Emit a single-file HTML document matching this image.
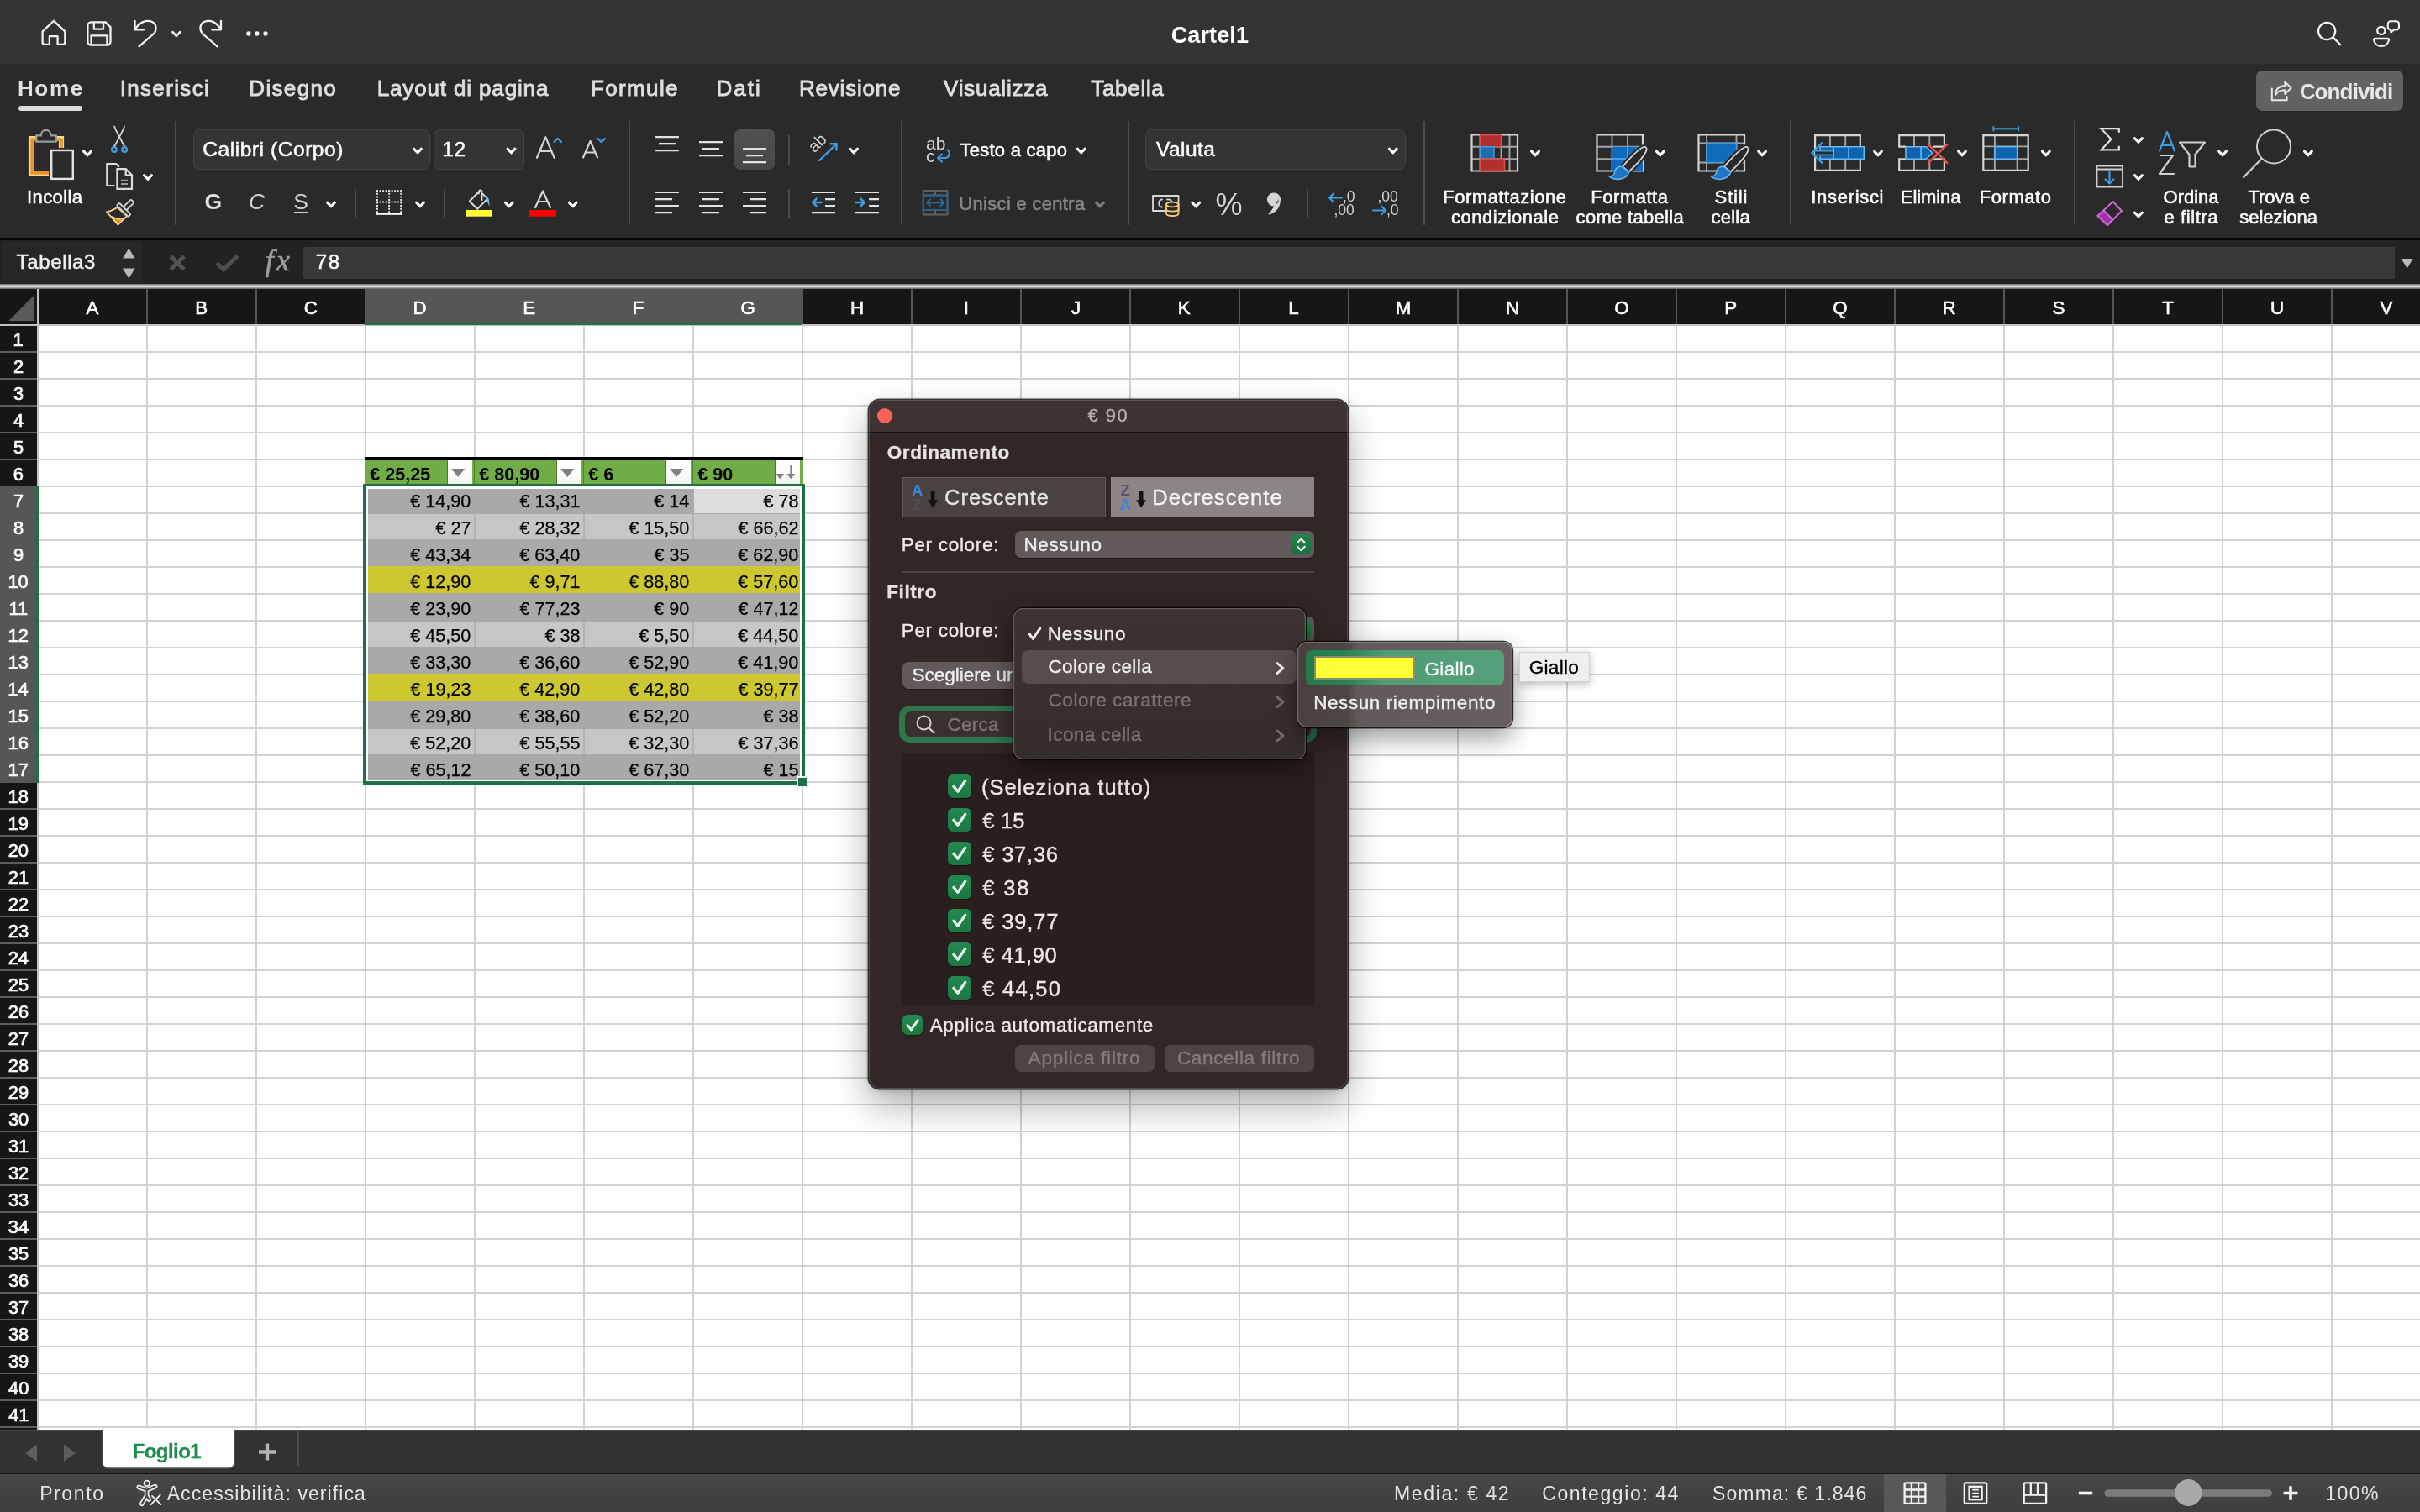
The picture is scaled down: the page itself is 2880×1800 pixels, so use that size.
<!DOCTYPE html>
<html lang="it"><head><meta charset="utf-8"><title>Cartel1</title>
<style>
html,body{margin:0;padding:0;background:#fff;}
body{width:2880px;height:1800px;position:relative;overflow:hidden;font-family:"Liberation Sans",sans-serif;}
div,span,svg{position:absolute;display:block;}
</style></head><body>
<div id="app" style="left:0;top:0;width:2880px;height:1800px;will-change:transform;">
<div style="left:0px;top:344px;width:2880px;height:1358px;background:#fff;"></div>
<div style="left:44px;top:386px;width:2836px;height:1316px;background:linear-gradient(to right,#d2d2d2 2px,transparent 2px) 0 0/130px 100%,linear-gradient(to bottom,#d2d2d2 2px,transparent 2px) 0 0/100% 32px;"></div>
<div style="left:0px;top:344px;width:2880px;height:42px;background:#161616;"></div>
<div style="left:44px;top:344px;width:2836px;height:42px;background:linear-gradient(to right,#555 2px,transparent 2px) 0 0/130px 100%;"></div>
<div style="left:44px;top:344px;width:2px;height:42px;background:#c4c2be;"></div>
<div style="left:0px;top:386px;width:2880px;height:2px;background:#c4c2be;"></div>
<div style="left:434px;top:344px;width:521px;height:42px;background:#565656;"></div>
<div style="left:434px;top:384px;width:521px;height:3px;background:#1e7145;"></div>
<svg style="left:0;top:344px" width="44" height="42"><polygon points="40,8 40,38 10.3,38" fill="#5a5a5a"/></svg>
<span style="left:102.59px;top:356px;font:22.3px/22.3px 'Liberation Sans',sans-serif;color:#fff;white-space:pre;-webkit-text-stroke:0.6px #fff;">A</span>
<span style="left:232.25px;top:356px;font:22.3px/22.3px 'Liberation Sans',sans-serif;color:#fff;white-space:pre;-webkit-text-stroke:0.6px #fff;">B</span>
<span style="left:361.80px;top:356px;font:22.3px/22.3px 'Liberation Sans',sans-serif;color:#fff;white-space:pre;-webkit-text-stroke:0.6px #fff;">C</span>
<span style="left:491.58px;top:356px;font:22.3px/22.3px 'Liberation Sans',sans-serif;color:#fff;white-space:pre;-webkit-text-stroke:0.6px #fff;">D</span>
<span style="left:622.14px;top:356px;font:22.3px/22.3px 'Liberation Sans',sans-serif;color:#fff;white-space:pre;-webkit-text-stroke:0.6px #fff;">E</span>
<span style="left:752.70px;top:356px;font:22.3px/22.3px 'Liberation Sans',sans-serif;color:#fff;white-space:pre;-webkit-text-stroke:0.6px #fff;">F</span>
<span style="left:881.58px;top:356px;font:22.3px/22.3px 'Liberation Sans',sans-serif;color:#fff;white-space:pre;-webkit-text-stroke:0.6px #fff;">G</span>
<span style="left:1011.91px;top:356px;font:22.3px/22.3px 'Liberation Sans',sans-serif;color:#fff;white-space:pre;-webkit-text-stroke:0.6px #fff;">H</span>
<span style="left:1146.87px;top:356px;font:22.3px/22.3px 'Liberation Sans',sans-serif;color:#fff;white-space:pre;-webkit-text-stroke:0.6px #fff;">I</span>
<span style="left:1275.04px;top:356px;font:22.3px/22.3px 'Liberation Sans',sans-serif;color:#fff;white-space:pre;-webkit-text-stroke:0.6px #fff;">J</span>
<span style="left:1401.75px;top:356px;font:22.3px/22.3px 'Liberation Sans',sans-serif;color:#fff;white-space:pre;-webkit-text-stroke:0.6px #fff;">K</span>
<span style="left:1533.25px;top:356px;font:22.3px/22.3px 'Liberation Sans',sans-serif;color:#fff;white-space:pre;-webkit-text-stroke:0.6px #fff;">L</span>
<span style="left:1660.69px;top:356px;font:22.3px/22.3px 'Liberation Sans',sans-serif;color:#fff;white-space:pre;-webkit-text-stroke:0.6px #fff;">M</span>
<span style="left:1791.91px;top:356px;font:22.3px/22.3px 'Liberation Sans',sans-serif;color:#fff;white-space:pre;-webkit-text-stroke:0.6px #fff;">N</span>
<span style="left:1921.36px;top:356px;font:22.3px/22.3px 'Liberation Sans',sans-serif;color:#fff;white-space:pre;-webkit-text-stroke:0.6px #fff;">O</span>
<span style="left:2052.25px;top:356px;font:22.3px/22.3px 'Liberation Sans',sans-serif;color:#fff;white-space:pre;-webkit-text-stroke:0.6px #fff;">P</span>
<span style="left:2181.36px;top:356px;font:22.3px/22.3px 'Liberation Sans',sans-serif;color:#fff;white-space:pre;-webkit-text-stroke:0.6px #fff;">Q</span>
<span style="left:2311.52px;top:356px;font:22.3px/22.3px 'Liberation Sans',sans-serif;color:#fff;white-space:pre;-webkit-text-stroke:0.6px #fff;">R</span>
<span style="left:2442.53px;top:356px;font:22.3px/22.3px 'Liberation Sans',sans-serif;color:#fff;white-space:pre;-webkit-text-stroke:0.6px #fff;">S</span>
<span style="left:2573.20px;top:356px;font:22.3px/22.3px 'Liberation Sans',sans-serif;color:#fff;white-space:pre;-webkit-text-stroke:0.6px #fff;">T</span>
<span style="left:2701.97px;top:356px;font:22.3px/22.3px 'Liberation Sans',sans-serif;color:#fff;white-space:pre;-webkit-text-stroke:0.6px #fff;">U</span>
<span style="left:2832.59px;top:356px;font:22.3px/22.3px 'Liberation Sans',sans-serif;color:#fff;white-space:pre;-webkit-text-stroke:0.6px #fff;">V</span>
<div style="left:0px;top:388px;width:44px;height:1314px;background:#161616;"></div>
<div style="left:0px;top:386px;width:44px;height:1316px;background:linear-gradient(to bottom,#5e5e5e 2px,transparent 2px) 0 0/100% 32px;"></div>
<div style="left:0px;top:386px;width:46px;height:2px;background:#c4c2be;"></div>
<div style="left:44px;top:388px;width:2px;height:1314px;background:#c4c2be;"></div>
<div style="left:0px;top:578px;width:44px;height:354px;background:#565656;"></div>
<div style="left:42px;top:578px;width:4px;height:354px;background:#1e7145;"></div>
<span style="left:15.62px;top:394px;font:21.8px/21.8px 'Liberation Sans',sans-serif;color:#fff;white-space:pre;-webkit-text-stroke:0.7px #fff;">1</span>
<span style="left:15.90px;top:426px;font:21.8px/21.8px 'Liberation Sans',sans-serif;color:#fff;white-space:pre;-webkit-text-stroke:0.7px #fff;">2</span>
<span style="left:16.00px;top:458px;font:21.8px/21.8px 'Liberation Sans',sans-serif;color:#fff;white-space:pre;-webkit-text-stroke:0.7px #fff;">3</span>
<span style="left:16.00px;top:490px;font:21.8px/21.8px 'Liberation Sans',sans-serif;color:#fff;white-space:pre;-webkit-text-stroke:0.7px #fff;">4</span>
<span style="left:15.95px;top:522px;font:21.8px/21.8px 'Liberation Sans',sans-serif;color:#fff;white-space:pre;-webkit-text-stroke:0.7px #fff;">5</span>
<span style="left:15.84px;top:554px;font:21.8px/21.8px 'Liberation Sans',sans-serif;color:#fff;white-space:pre;-webkit-text-stroke:0.7px #fff;">6</span>
<span style="left:15.90px;top:586px;font:21.8px/21.8px 'Liberation Sans',sans-serif;color:#fff;white-space:pre;-webkit-text-stroke:0.7px #fff;">7</span>
<span style="left:15.95px;top:618px;font:21.8px/21.8px 'Liberation Sans',sans-serif;color:#fff;white-space:pre;-webkit-text-stroke:0.7px #fff;">8</span>
<span style="left:15.95px;top:650px;font:21.8px/21.8px 'Liberation Sans',sans-serif;color:#fff;white-space:pre;-webkit-text-stroke:0.7px #fff;">9</span>
<span style="left:9.46px;top:682px;font:21.8px/21.8px 'Liberation Sans',sans-serif;color:#fff;white-space:pre;-webkit-text-stroke:0.7px #fff;">10</span>
<span style="left:10.39px;top:714px;font:21.8px/21.8px 'Liberation Sans',sans-serif;color:#fff;white-space:pre;-webkit-text-stroke:0.7px #fff;">11</span>
<span style="left:9.57px;top:746px;font:21.8px/21.8px 'Liberation Sans',sans-serif;color:#fff;white-space:pre;-webkit-text-stroke:0.7px #fff;">12</span>
<span style="left:9.52px;top:778px;font:21.8px/21.8px 'Liberation Sans',sans-serif;color:#fff;white-space:pre;-webkit-text-stroke:0.7px #fff;">13</span>
<span style="left:9.36px;top:810px;font:21.8px/21.8px 'Liberation Sans',sans-serif;color:#fff;white-space:pre;-webkit-text-stroke:0.7px #fff;">14</span>
<span style="left:9.52px;top:842px;font:21.8px/21.8px 'Liberation Sans',sans-serif;color:#fff;white-space:pre;-webkit-text-stroke:0.7px #fff;">15</span>
<span style="left:9.52px;top:874px;font:21.8px/21.8px 'Liberation Sans',sans-serif;color:#fff;white-space:pre;-webkit-text-stroke:0.7px #fff;">16</span>
<span style="left:9.57px;top:906px;font:21.8px/21.8px 'Liberation Sans',sans-serif;color:#fff;white-space:pre;-webkit-text-stroke:0.7px #fff;">17</span>
<span style="left:9.52px;top:938px;font:21.8px/21.8px 'Liberation Sans',sans-serif;color:#fff;white-space:pre;-webkit-text-stroke:0.7px #fff;">18</span>
<span style="left:9.57px;top:970px;font:21.8px/21.8px 'Liberation Sans',sans-serif;color:#fff;white-space:pre;-webkit-text-stroke:0.7px #fff;">19</span>
<span style="left:9.74px;top:1002px;font:21.8px/21.8px 'Liberation Sans',sans-serif;color:#fff;white-space:pre;-webkit-text-stroke:0.7px #fff;">20</span>
<span style="left:9.85px;top:1034px;font:21.8px/21.8px 'Liberation Sans',sans-serif;color:#fff;white-space:pre;-webkit-text-stroke:0.7px #fff;">21</span>
<span style="left:9.85px;top:1066px;font:21.8px/21.8px 'Liberation Sans',sans-serif;color:#fff;white-space:pre;-webkit-text-stroke:0.7px #fff;">22</span>
<span style="left:9.79px;top:1098px;font:21.8px/21.8px 'Liberation Sans',sans-serif;color:#fff;white-space:pre;-webkit-text-stroke:0.7px #fff;">23</span>
<span style="left:9.63px;top:1130px;font:21.8px/21.8px 'Liberation Sans',sans-serif;color:#fff;white-space:pre;-webkit-text-stroke:0.7px #fff;">24</span>
<span style="left:9.79px;top:1162px;font:21.8px/21.8px 'Liberation Sans',sans-serif;color:#fff;white-space:pre;-webkit-text-stroke:0.7px #fff;">25</span>
<span style="left:9.79px;top:1194px;font:21.8px/21.8px 'Liberation Sans',sans-serif;color:#fff;white-space:pre;-webkit-text-stroke:0.7px #fff;">26</span>
<span style="left:9.85px;top:1226px;font:21.8px/21.8px 'Liberation Sans',sans-serif;color:#fff;white-space:pre;-webkit-text-stroke:0.7px #fff;">27</span>
<span style="left:9.79px;top:1258px;font:21.8px/21.8px 'Liberation Sans',sans-serif;color:#fff;white-space:pre;-webkit-text-stroke:0.7px #fff;">28</span>
<span style="left:9.85px;top:1290px;font:21.8px/21.8px 'Liberation Sans',sans-serif;color:#fff;white-space:pre;-webkit-text-stroke:0.7px #fff;">29</span>
<span style="left:9.90px;top:1322px;font:21.8px/21.8px 'Liberation Sans',sans-serif;color:#fff;white-space:pre;-webkit-text-stroke:0.7px #fff;">30</span>
<span style="left:10.01px;top:1354px;font:21.8px/21.8px 'Liberation Sans',sans-serif;color:#fff;white-space:pre;-webkit-text-stroke:0.7px #fff;">31</span>
<span style="left:10.01px;top:1386px;font:21.8px/21.8px 'Liberation Sans',sans-serif;color:#fff;white-space:pre;-webkit-text-stroke:0.7px #fff;">32</span>
<span style="left:9.96px;top:1418px;font:21.8px/21.8px 'Liberation Sans',sans-serif;color:#fff;white-space:pre;-webkit-text-stroke:0.7px #fff;">33</span>
<span style="left:9.79px;top:1450px;font:21.8px/21.8px 'Liberation Sans',sans-serif;color:#fff;white-space:pre;-webkit-text-stroke:0.7px #fff;">34</span>
<span style="left:9.96px;top:1482px;font:21.8px/21.8px 'Liberation Sans',sans-serif;color:#fff;white-space:pre;-webkit-text-stroke:0.7px #fff;">35</span>
<span style="left:9.96px;top:1514px;font:21.8px/21.8px 'Liberation Sans',sans-serif;color:#fff;white-space:pre;-webkit-text-stroke:0.7px #fff;">36</span>
<span style="left:10.01px;top:1546px;font:21.8px/21.8px 'Liberation Sans',sans-serif;color:#fff;white-space:pre;-webkit-text-stroke:0.7px #fff;">37</span>
<span style="left:9.96px;top:1578px;font:21.8px/21.8px 'Liberation Sans',sans-serif;color:#fff;white-space:pre;-webkit-text-stroke:0.7px #fff;">38</span>
<span style="left:10.01px;top:1610px;font:21.8px/21.8px 'Liberation Sans',sans-serif;color:#fff;white-space:pre;-webkit-text-stroke:0.7px #fff;">39</span>
<span style="left:10.06px;top:1642px;font:21.8px/21.8px 'Liberation Sans',sans-serif;color:#fff;white-space:pre;-webkit-text-stroke:0.7px #fff;">40</span>
<span style="left:10.17px;top:1674px;font:21.8px/21.8px 'Liberation Sans',sans-serif;color:#fff;white-space:pre;-webkit-text-stroke:0.7px #fff;">41</span>
<div style="left:434px;top:544px;width:522px;height:4px;background:#000;"></div>
<div style="left:434px;top:548px;width:522px;height:30px;background:#70ad47;"></div>
<span style="left:440.29px;top:554px;font:bold 21.6px/21.6px 'Liberation Sans',sans-serif;color:#000;white-space:pre;">€ 25,25</span>
<div style="left:532.3px;top:548px;width:29.8px;height:28px;background:linear-gradient(#fff 45%,#f1f1f1);border-left:1.600px solid #4f7a2e;box-sizing:border-box;"><svg width="30" height="28" style="left:-1.600px;top:0"><polygon points="5.100,10.100 21.300,10.100 13.200,20" fill="#808080"/></svg></div>
<div style="left:563.5px;top:548px;width:1.5px;height:30px;background:#4e8530;"></div>
<span style="left:570.29px;top:554px;font:bold 21.6px/21.6px 'Liberation Sans',sans-serif;color:#000;white-space:pre;">€ 80,90</span>
<div style="left:662.3px;top:548px;width:29.8px;height:28px;background:linear-gradient(#fff 45%,#f1f1f1);border-left:1.600px solid #4f7a2e;box-sizing:border-box;"><svg width="30" height="28" style="left:-1.600px;top:0"><polygon points="5.100,10.100 21.300,10.100 13.200,20" fill="#808080"/></svg></div>
<div style="left:693.5px;top:548px;width:1.5px;height:30px;background:#4e8530;"></div>
<span style="left:700.29px;top:554px;font:bold 21.6px/21.6px 'Liberation Sans',sans-serif;color:#000;white-space:pre;">€ 6</span>
<div style="left:792.3px;top:548px;width:29.8px;height:28px;background:linear-gradient(#fff 45%,#f1f1f1);border-left:1.600px solid #4f7a2e;box-sizing:border-box;"><svg width="30" height="28" style="left:-1.600px;top:0"><polygon points="5.100,10.100 21.300,10.100 13.200,20" fill="#808080"/></svg></div>
<div style="left:823.5px;top:548px;width:1.5px;height:30px;background:#4e8530;"></div>
<span style="left:830.29px;top:554px;font:bold 21.6px/21.6px 'Liberation Sans',sans-serif;color:#000;white-space:pre;">€ 90</span>
<div style="left:922.3px;top:548px;width:29.8px;height:28px;background:linear-gradient(#fff 45%,#f1f1f1);border-left:1.600px solid #4f7a2e;box-sizing:border-box;"><svg width="30" height="28" style="left:-1.600px;top:0"><polygon points="1.200,16 11.400,16 6.300,22.200" fill="#808080"/><path d="M19.300 6V17" stroke="#808080" stroke-width="1.900"/><polygon points="14.300,15.900 24.300,15.900 19.300,22.200" fill="#808080"/></svg></div>
<div style="left:954px;top:548px;width:2px;height:30px;background:#70ad47;"></div>
<div style="left:432px;top:576px;width:526px;height:358px;background:#1e7145;"></div>
<div style="left:435.3px;top:579.4px;width:518.8px;height:350.4px;background:#fff;"></div>
<div style="left:438px;top:582px;width:514px;height:346px;background:#c6c6c6;"></div>
<div style="left:564px;top:612px;width:2px;height:30px;background:#b2b2b2;"></div>
<div style="left:694px;top:612px;width:2px;height:30px;background:#b2b2b2;"></div>
<div style="left:824px;top:612px;width:2px;height:30px;background:#b2b2b2;"></div>
<div style="left:564px;top:740px;width:2px;height:30px;background:#b2b2b2;"></div>
<div style="left:694px;top:740px;width:2px;height:30px;background:#b2b2b2;"></div>
<div style="left:824px;top:740px;width:2px;height:30px;background:#b2b2b2;"></div>
<div style="left:564px;top:868px;width:2px;height:30px;background:#b2b2b2;"></div>
<div style="left:694px;top:868px;width:2px;height:30px;background:#b2b2b2;"></div>
<div style="left:824px;top:868px;width:2px;height:30px;background:#b2b2b2;"></div>
<div style="left:438px;top:582px;width:514px;height:30px;background:#a9a9a9;"></div>
<div style="left:438px;top:642px;width:514px;height:34px;background:#a9a9a9;"></div>
<div style="left:438px;top:674px;width:514px;height:34px;background:#cdc82f;"></div>
<div style="left:438px;top:706px;width:514px;height:34px;background:#a9a9a9;"></div>
<div style="left:438px;top:770px;width:514px;height:34px;background:#a9a9a9;"></div>
<div style="left:438px;top:802px;width:514px;height:34px;background:#cdc82f;"></div>
<div style="left:438px;top:834px;width:514px;height:34px;background:#a9a9a9;"></div>
<div style="left:438px;top:898px;width:514px;height:30px;background:#a9a9a9;"></div>
<span style="left:488.34px;top:586px;font:21.6px/21.6px 'Liberation Sans',sans-serif;color:#000;white-space:pre;-webkit-text-stroke:0.25px #000;">€ 14,90</span>
<span style="left:618.56px;top:586px;font:21.6px/21.6px 'Liberation Sans',sans-serif;color:#000;white-space:pre;-webkit-text-stroke:0.25px #000;">€ 13,31</span>
<span style="left:778.14px;top:586px;font:21.6px/21.6px 'Liberation Sans',sans-serif;color:#000;white-space:pre;-webkit-text-stroke:0.25px #000;">€ 14</span>
<span style="left:518.57px;top:618px;font:21.6px/21.6px 'Liberation Sans',sans-serif;color:#000;white-space:pre;-webkit-text-stroke:0.25px #000;">€ 27</span>
<span style="left:618.56px;top:618px;font:21.6px/21.6px 'Liberation Sans',sans-serif;color:#000;white-space:pre;-webkit-text-stroke:0.25px #000;">€ 28,32</span>
<span style="left:748.34px;top:618px;font:21.6px/21.6px 'Liberation Sans',sans-serif;color:#000;white-space:pre;-webkit-text-stroke:0.25px #000;">€ 15,50</span>
<span style="left:878.56px;top:618px;font:21.6px/21.6px 'Liberation Sans',sans-serif;color:#000;white-space:pre;-webkit-text-stroke:0.25px #000;">€ 66,62</span>
<span style="left:488.13px;top:650px;font:21.6px/21.6px 'Liberation Sans',sans-serif;color:#000;white-space:pre;-webkit-text-stroke:0.25px #000;">€ 43,34</span>
<span style="left:618.34px;top:650px;font:21.6px/21.6px 'Liberation Sans',sans-serif;color:#000;white-space:pre;-webkit-text-stroke:0.25px #000;">€ 63,40</span>
<span style="left:778.46px;top:650px;font:21.6px/21.6px 'Liberation Sans',sans-serif;color:#000;white-space:pre;-webkit-text-stroke:0.25px #000;">€ 35</span>
<span style="left:878.34px;top:650px;font:21.6px/21.6px 'Liberation Sans',sans-serif;color:#000;white-space:pre;-webkit-text-stroke:0.25px #000;">€ 62,90</span>
<span style="left:488.34px;top:682px;font:21.6px/21.6px 'Liberation Sans',sans-serif;color:#000;white-space:pre;-webkit-text-stroke:0.25px #000;">€ 12,90</span>
<span style="left:630.53px;top:682px;font:21.6px/21.6px 'Liberation Sans',sans-serif;color:#000;white-space:pre;-webkit-text-stroke:0.25px #000;">€ 9,71</span>
<span style="left:748.34px;top:682px;font:21.6px/21.6px 'Liberation Sans',sans-serif;color:#000;white-space:pre;-webkit-text-stroke:0.25px #000;">€ 88,80</span>
<span style="left:878.34px;top:682px;font:21.6px/21.6px 'Liberation Sans',sans-serif;color:#000;white-space:pre;-webkit-text-stroke:0.25px #000;">€ 57,60</span>
<span style="left:488.34px;top:714px;font:21.6px/21.6px 'Liberation Sans',sans-serif;color:#000;white-space:pre;-webkit-text-stroke:0.25px #000;">€ 23,90</span>
<span style="left:618.45px;top:714px;font:21.6px/21.6px 'Liberation Sans',sans-serif;color:#000;white-space:pre;-webkit-text-stroke:0.25px #000;">€ 77,23</span>
<span style="left:778.35px;top:714px;font:21.6px/21.6px 'Liberation Sans',sans-serif;color:#000;white-space:pre;-webkit-text-stroke:0.25px #000;">€ 90</span>
<span style="left:878.56px;top:714px;font:21.6px/21.6px 'Liberation Sans',sans-serif;color:#000;white-space:pre;-webkit-text-stroke:0.25px #000;">€ 47,12</span>
<span style="left:488.34px;top:746px;font:21.6px/21.6px 'Liberation Sans',sans-serif;color:#000;white-space:pre;-webkit-text-stroke:0.25px #000;">€ 45,50</span>
<span style="left:648.46px;top:746px;font:21.6px/21.6px 'Liberation Sans',sans-serif;color:#000;white-space:pre;-webkit-text-stroke:0.25px #000;">€ 38</span>
<span style="left:760.32px;top:746px;font:21.6px/21.6px 'Liberation Sans',sans-serif;color:#000;white-space:pre;-webkit-text-stroke:0.25px #000;">€ 5,50</span>
<span style="left:878.34px;top:746px;font:21.6px/21.6px 'Liberation Sans',sans-serif;color:#000;white-space:pre;-webkit-text-stroke:0.25px #000;">€ 44,50</span>
<span style="left:488.34px;top:778px;font:21.6px/21.6px 'Liberation Sans',sans-serif;color:#000;white-space:pre;-webkit-text-stroke:0.25px #000;">€ 33,30</span>
<span style="left:618.34px;top:778px;font:21.6px/21.6px 'Liberation Sans',sans-serif;color:#000;white-space:pre;-webkit-text-stroke:0.25px #000;">€ 36,60</span>
<span style="left:748.34px;top:778px;font:21.6px/21.6px 'Liberation Sans',sans-serif;color:#000;white-space:pre;-webkit-text-stroke:0.25px #000;">€ 52,90</span>
<span style="left:878.34px;top:778px;font:21.6px/21.6px 'Liberation Sans',sans-serif;color:#000;white-space:pre;-webkit-text-stroke:0.25px #000;">€ 41,90</span>
<span style="left:488.45px;top:810px;font:21.6px/21.6px 'Liberation Sans',sans-serif;color:#000;white-space:pre;-webkit-text-stroke:0.25px #000;">€ 19,23</span>
<span style="left:618.34px;top:810px;font:21.6px/21.6px 'Liberation Sans',sans-serif;color:#000;white-space:pre;-webkit-text-stroke:0.25px #000;">€ 42,90</span>
<span style="left:748.34px;top:810px;font:21.6px/21.6px 'Liberation Sans',sans-serif;color:#000;white-space:pre;-webkit-text-stroke:0.25px #000;">€ 42,80</span>
<span style="left:878.56px;top:810px;font:21.6px/21.6px 'Liberation Sans',sans-serif;color:#000;white-space:pre;-webkit-text-stroke:0.25px #000;">€ 39,77</span>
<span style="left:488.34px;top:842px;font:21.6px/21.6px 'Liberation Sans',sans-serif;color:#000;white-space:pre;-webkit-text-stroke:0.25px #000;">€ 29,80</span>
<span style="left:618.34px;top:842px;font:21.6px/21.6px 'Liberation Sans',sans-serif;color:#000;white-space:pre;-webkit-text-stroke:0.25px #000;">€ 38,60</span>
<span style="left:748.34px;top:842px;font:21.6px/21.6px 'Liberation Sans',sans-serif;color:#000;white-space:pre;-webkit-text-stroke:0.25px #000;">€ 52,20</span>
<span style="left:908.46px;top:842px;font:21.6px/21.6px 'Liberation Sans',sans-serif;color:#000;white-space:pre;-webkit-text-stroke:0.25px #000;">€ 38</span>
<span style="left:488.34px;top:874px;font:21.6px/21.6px 'Liberation Sans',sans-serif;color:#000;white-space:pre;-webkit-text-stroke:0.25px #000;">€ 52,20</span>
<span style="left:618.45px;top:874px;font:21.6px/21.6px 'Liberation Sans',sans-serif;color:#000;white-space:pre;-webkit-text-stroke:0.25px #000;">€ 55,55</span>
<span style="left:748.34px;top:874px;font:21.6px/21.6px 'Liberation Sans',sans-serif;color:#000;white-space:pre;-webkit-text-stroke:0.25px #000;">€ 32,30</span>
<span style="left:878.45px;top:874px;font:21.6px/21.6px 'Liberation Sans',sans-serif;color:#000;white-space:pre;-webkit-text-stroke:0.25px #000;">€ 37,36</span>
<span style="left:488.56px;top:906px;font:21.6px/21.6px 'Liberation Sans',sans-serif;color:#000;white-space:pre;-webkit-text-stroke:0.25px #000;">€ 65,12</span>
<span style="left:618.34px;top:906px;font:21.6px/21.6px 'Liberation Sans',sans-serif;color:#000;white-space:pre;-webkit-text-stroke:0.25px #000;">€ 50,10</span>
<span style="left:748.34px;top:906px;font:21.6px/21.6px 'Liberation Sans',sans-serif;color:#000;white-space:pre;-webkit-text-stroke:0.25px #000;">€ 67,30</span>
<span style="left:908.46px;top:906px;font:21.6px/21.6px 'Liberation Sans',sans-serif;color:#000;white-space:pre;-webkit-text-stroke:0.25px #000;">€ 15</span>
<div style="left:826px;top:582px;width:126px;height:28.5px;background:#dcdcdc;"></div>
<span style="left:908.46px;top:586px;font:21.6px/21.6px 'Liberation Sans',sans-serif;color:#000;white-space:pre;-webkit-text-stroke:0.25px #000;">€ 78</span>
<div style="left:948px;top:924px;width:12px;height:12px;background:#fff;"></div>
<div style="left:950px;top:926px;width:10px;height:10px;background:#1e7145;"></div>
<div style="left:0px;top:0px;width:2880px;height:76px;background:#343434;"></div>
<div style="left:0px;top:76px;width:2880px;height:207px;background:#2a2a2a;"></div>
<div style="left:0px;top:283.4px;width:2880px;height:2.8px;background:#050505;"></div>
<div style="left:0px;top:286px;width:2880px;height:52px;background:#222;"></div>
<div style="left:2px;top:288px;width:166.6px;height:48.5px;background:#272727;"></div>
<div style="left:0px;top:337.5px;width:2880px;height:6.5px;background:linear-gradient(#6a6a6a,#e8e8e8 45%,#e0e0e0 55%,#5a5a5a);"></div>
<span style="left:1393.72px;top:29px;font:bold 27px/27px 'Liberation Sans',sans-serif;color:#fff;white-space:pre;letter-spacing:0.105px;">Cartel1</span>
<span style="left:20.91px;top:92px;font:bold 26px/26px 'Liberation Sans',sans-serif;color:#e2e2e2;white-space:pre;letter-spacing:1.669px;">Home</span>
<span style="left:142.66px;top:92px;font:26px/26px 'Liberation Sans',sans-serif;color:#dedede;white-space:pre;letter-spacing:1.342px;-webkit-text-stroke:0.9px #dedede;">Inserisci</span>
<span style="left:296.32px;top:92px;font:26px/26px 'Liberation Sans',sans-serif;color:#dedede;white-space:pre;letter-spacing:1.332px;-webkit-text-stroke:0.9px #dedede;">Disegno</span>
<span style="left:448.72px;top:92px;font:26px/26px 'Liberation Sans',sans-serif;color:#dedede;white-space:pre;letter-spacing:0.854px;-webkit-text-stroke:0.9px #dedede;">Layout di pagina</span>
<span style="left:702.92px;top:92px;font:26px/26px 'Liberation Sans',sans-serif;color:#dedede;white-space:pre;letter-spacing:1.372px;-webkit-text-stroke:0.9px #dedede;">Formule</span>
<span style="left:852.42px;top:92px;font:26px/26px 'Liberation Sans',sans-serif;color:#dedede;white-space:pre;letter-spacing:2.036px;-webkit-text-stroke:0.9px #dedede;">Dati</span>
<span style="left:950.92px;top:92px;font:26px/26px 'Liberation Sans',sans-serif;color:#dedede;white-space:pre;letter-spacing:0.810px;-webkit-text-stroke:0.9px #dedede;">Revisione</span>
<span style="left:1123.00px;top:92px;font:26px/26px 'Liberation Sans',sans-serif;color:#dedede;white-space:pre;letter-spacing:0.761px;-webkit-text-stroke:0.9px #dedede;">Visualizza</span>
<span style="left:1298.18px;top:92px;font:26px/26px 'Liberation Sans',sans-serif;color:#dedede;white-space:pre;letter-spacing:0.710px;-webkit-text-stroke:0.9px #dedede;">Tabella</span>
<div style="left:22px;top:126px;width:76px;height:6px;background:#dcdcdc;border-radius:3px;"></div>
<div style="left:2685px;top:84.2px;width:175px;height:47.6px;background:#626262;border-radius:7.500px;"></div>
<span style="left:2736.66px;top:96px;font:bold 26px/26px 'Liberation Sans',sans-serif;color:#e8e8e8;white-space:pre;letter-spacing:-0.859px;">Condividi</span>
<div style="left:230px;top:154px;width:281.7px;height:47.7px;background:#343434;border:1.5px solid #444;border-radius:7px;box-sizing:border-box;"></div>
<div style="left:516px;top:154px;width:108px;height:47.7px;background:#343434;border:1.5px solid #444;border-radius:7px;box-sizing:border-box;"></div>
<div style="left:1363.3px;top:154px;width:309.4px;height:47.7px;background:#343434;border:1.5px solid #444;border-radius:7px;box-sizing:border-box;"></div>
<span style="left:241.28px;top:166px;font:24.5px/24.5px 'Liberation Sans',sans-serif;color:#fff;white-space:pre;letter-spacing:0.559px;-webkit-text-stroke:0.5px #fff;">Calibri (Corpo)</span>
<span style="left:526.16px;top:166px;font:24.5px/24.5px 'Liberation Sans',sans-serif;color:#fff;white-space:pre;letter-spacing:0.732px;-webkit-text-stroke:0.5px #fff;">12</span>
<span style="left:1376.00px;top:166px;font:24.5px/24.5px 'Liberation Sans',sans-serif;color:#fff;white-space:pre;letter-spacing:0.451px;-webkit-text-stroke:0.5px #fff;">Valuta</span>
<div style="left:874px;top:154px;width:48px;height:48px;background:linear-gradient(#515151,#474747);border-radius:7px;"></div>
<div style="left:208px;top:144px;width:2px;height:124px;background:#4c4c4c;"></div>
<div style="left:747.9px;top:144px;width:2px;height:124px;background:#4c4c4c;"></div>
<div style="left:1072.2px;top:144px;width:2px;height:124px;background:#4c4c4c;"></div>
<div style="left:1341.7px;top:144px;width:2px;height:124px;background:#4c4c4c;"></div>
<div style="left:1694px;top:144px;width:2px;height:124px;background:#4c4c4c;"></div>
<div style="left:2129.9px;top:144px;width:2px;height:124px;background:#4c4c4c;"></div>
<div style="left:2468.4px;top:144px;width:2px;height:124px;background:#4c4c4c;"></div>
<div style="left:422px;top:224.6px;width:2px;height:34.8px;background:#4c4c4c;"></div>
<div style="left:528px;top:224.6px;width:2px;height:34.8px;background:#4c4c4c;"></div>
<div style="left:938.3px;top:160.7px;width:2px;height:35.1px;background:#4c4c4c;"></div>
<div style="left:938.3px;top:224.6px;width:2px;height:34.8px;background:#4c4c4c;"></div>
<div style="left:1555px;top:224.6px;width:2px;height:34.8px;background:#4c4c4c;"></div>
<span style="left:32.02px;top:224px;font:22px/22px 'Liberation Sans',sans-serif;color:#fff;white-space:pre;letter-spacing:0.382px;-webkit-text-stroke:0.55px #fff;">Incolla</span>
<span style="left:1142.56px;top:168px;font:22px/22px 'Liberation Sans',sans-serif;color:#fff;white-space:pre;letter-spacing:0.235px;-webkit-text-stroke:0.55px #fff;">Testo a capo</span>
<span style="left:1141.35px;top:232px;font:22px/22px 'Liberation Sans',sans-serif;color:#858585;white-space:pre;letter-spacing:0.307px;-webkit-text-stroke:0.55px #858585;">Unisci e centra</span>
<span style="left:1717.24px;top:224px;font:22px/22px 'Liberation Sans',sans-serif;color:#fff;white-space:pre;letter-spacing:0.505px;-webkit-text-stroke:0.55px #fff;">Formattazione</span>
<span style="left:1727.12px;top:248px;font:22px/22px 'Liberation Sans',sans-serif;color:#fff;white-space:pre;letter-spacing:0.495px;-webkit-text-stroke:0.55px #fff;">condizionale</span>
<span style="left:1893.24px;top:224px;font:22px/22px 'Liberation Sans',sans-serif;color:#fff;white-space:pre;letter-spacing:0.520px;-webkit-text-stroke:0.55px #fff;">Formatta</span>
<span style="left:1875.62px;top:248px;font:22px/22px 'Liberation Sans',sans-serif;color:#fff;white-space:pre;letter-spacing:0.302px;-webkit-text-stroke:0.55px #fff;">come tabella</span>
<span style="left:2040.61px;top:224px;font:22px/22px 'Liberation Sans',sans-serif;color:#fff;white-space:pre;letter-spacing:0.849px;-webkit-text-stroke:0.55px #fff;">Stili</span>
<span style="left:2036.52px;top:248px;font:22px/22px 'Liberation Sans',sans-serif;color:#fff;white-space:pre;letter-spacing:0.214px;-webkit-text-stroke:0.55px #fff;">cella</span>
<span style="left:2155.32px;top:224px;font:22px/22px 'Liberation Sans',sans-serif;color:#fff;white-space:pre;letter-spacing:0.685px;-webkit-text-stroke:0.55px #fff;">Inserisci</span>
<span style="left:2261.84px;top:224px;font:22px/22px 'Liberation Sans',sans-serif;color:#fff;white-space:pre;letter-spacing:-0.085px;-webkit-text-stroke:0.55px #fff;">Elimina</span>
<span style="left:2355.74px;top:224px;font:22px/22px 'Liberation Sans',sans-serif;color:#fff;white-space:pre;letter-spacing:0.548px;-webkit-text-stroke:0.55px #fff;">Formato</span>
<span style="left:2574.61px;top:224px;font:22px/22px 'Liberation Sans',sans-serif;color:#fff;white-space:pre;letter-spacing:-0.046px;-webkit-text-stroke:0.55px #fff;">Ordina</span>
<span style="left:2575.62px;top:248px;font:22px/22px 'Liberation Sans',sans-serif;color:#fff;white-space:pre;letter-spacing:0.574px;-webkit-text-stroke:0.55px #fff;">e filtra</span>
<span style="left:2675.56px;top:224px;font:22px/22px 'Liberation Sans',sans-serif;color:#fff;white-space:pre;letter-spacing:-0.065px;-webkit-text-stroke:0.55px #fff;">Trova e</span>
<span style="left:2665.25px;top:248px;font:22px/22px 'Liberation Sans',sans-serif;color:#fff;white-space:pre;letter-spacing:-0.038px;-webkit-text-stroke:0.55px #fff;">seleziona</span>
<span style="left:243.44px;top:227px;font:bold 26.5px/26.5px 'Liberation Sans',sans-serif;color:#e0e0e0;white-space:pre;">G</span>
<span style="left:296.04px;top:227px;font:italic 26.5px/26.5px 'Liberation Sans',sans-serif;color:#d0d0d0;white-space:pre;">C</span>
<span style="left:349.31px;top:227px;font:26.5px/26.5px 'Liberation Sans',sans-serif;color:#d0d0d0;white-space:pre;">S</span>
<div style="left:350px;top:251.8px;width:16px;height:1.8px;background:#d0d0d0;"></div>
<span style="left:19.52px;top:300px;font:24px/24px 'Liberation Sans',sans-serif;color:#f0f0f0;white-space:pre;letter-spacing:0.648px;-webkit-text-stroke:0.5px #f0f0f0;">Tabella3</span>
<div style="left:360.6px;top:294px;width:2489px;height:37.7px;background:#383838;border-radius:3px 0 0 3px;"></div>
<span style="left:375.80px;top:300px;font:24px/24px 'Liberation Sans',sans-serif;color:#fff;white-space:pre;letter-spacing:1.513px;-webkit-text-stroke:0.5px #fff;">78</span>
<span style="left:315.64px;top:292px;font:italic 36px/36px 'Liberation Serif',serif;color:#9c9c9c;white-space:pre;letter-spacing:3.440px;-webkit-text-stroke:0.7px #9c9c9c;">fx</span>
<svg style="left:0;top:0" width="2880" height="344" fill="none" stroke-linecap="round" stroke-linejoin="round"><g stroke="#f2f2f2" stroke-width="2.300"><path d="M50.6 37.4L64 24.8L77.3 37.4V50.6a2.2 2.200 0 0 1-2.200 2.200H68.6V43.2H58.900V52.800H52.800a2.200 2.200 0 0 1-2.200-2.200Z"/><path d="M108 26.400H125.500L131.500 32.400V49.500a4 4 0 0 1-4 4H108.400a4 4 0 0 1-4-4V30.400a4 4 0 0 1 4-4ZM111.800 26.400V34.600H123V26.400M108.500 53.500V42.300H127.400V53.500"/><path d="M160.500 25V35.300H171.200M165.400 55.300L181.800 41.200C187.500 36 186.500 28.500 180.500 25.800C174 23 166 26.500 161 34.800"/><path d="M263 25V35.300H252.300M258.600 55.300L242.200 41.200C236.500 36 237.500 28.500 243.500 25.800C250 23 258 26.500 262.500 34.800"/><circle cx="2769.100" cy="37.100" r="10.100"/><path d="M2776.600 44.600L2785.300 53.300"/><circle cx="2833.800" cy="36.400" r="4.600"/><path d="M2826.500 46H2841.600Q2843.200 46 2843 47.600C2841.500 57.300 2826.500 57.300 2825.100 47.600Q2824.900 46 2826.500 46Z"/><path d="M2845 25.200H2851.800a3.200 3.200 0 0 1 3.200 3.200V32.200a3.200 3.200 0 0 1-3.200 3.200H2849L2845.300 38.600V35.400H2845a3.200 3.200 0 0 1-3.200-3.200V28.400a3.200 3.200 0 0 1 3.200-3.200Z" stroke-width="2.100"/></g><path d="M205.5 38.2L209.9 42.9L214.3 38.2" stroke="#f2f2f2" stroke-width="2.8" fill="none" stroke-linecap="round" stroke-linejoin="round"/><g fill="#f2f2f2"><circle cx="295.900" cy="40" r="2.700"/><circle cx="305.900" cy="40" r="2.700"/><circle cx="316" cy="40" r="2.700"/></g><path d="M2703.800 105.500V119.300H2721.600V115M2708.300 112.800C2708.300 105.500 2712.500 102.300 2719.300 102.300V97.500L2726.700 104.800L2719.300 112V107.300C2714 107.300 2710.500 108.800 2708.300 112.800Z" stroke="#e6e6e6" stroke-width="2"/><path d="M99.6 180.1L104 184.8L108.4 180.1" stroke="#fff" stroke-width="3.1" fill="none" stroke-linecap="round" stroke-linejoin="round"/><path d="M171.6 208.6L176 213.3L180.4 208.6" stroke="#fff" stroke-width="3.1" fill="none" stroke-linecap="round" stroke-linejoin="round"/><path d="M492.6 177.1L497 181.8L501.4 177.1" stroke="#fff" stroke-width="3.1" fill="none" stroke-linecap="round" stroke-linejoin="round"/><path d="M604.1 177.1L608.5 181.8L612.9 177.1" stroke="#fff" stroke-width="3.1" fill="none" stroke-linecap="round" stroke-linejoin="round"/><path d="M389.6 241.1L394 245.8L398.4 241.1" stroke="#fff" stroke-width="3.1" fill="none" stroke-linecap="round" stroke-linejoin="round"/><path d="M495.6 241.1L500 245.8L504.4 241.1" stroke="#fff" stroke-width="3.1" fill="none" stroke-linecap="round" stroke-linejoin="round"/><path d="M601.35 241.1L605.75 245.8L610.15 241.1" stroke="#fff" stroke-width="3.1" fill="none" stroke-linecap="round" stroke-linejoin="round"/><path d="M677.3 241.1L681.7 245.8L686.1 241.1" stroke="#fff" stroke-width="3.1" fill="none" stroke-linecap="round" stroke-linejoin="round"/><path d="M1011.6 177.1L1016 181.8L1020.4 177.1" stroke="#fff" stroke-width="3.1" fill="none" stroke-linecap="round" stroke-linejoin="round"/><path d="M1282.35 177.1L1286.75 181.8L1291.15 177.1" stroke="#fff" stroke-width="3.1" fill="none" stroke-linecap="round" stroke-linejoin="round"/><path d="M1653.35 177.1L1657.75 181.8L1662.15 177.1" stroke="#fff" stroke-width="3.1" fill="none" stroke-linecap="round" stroke-linejoin="round"/><path d="M1418.9 241.1L1423.3 245.8L1427.7 241.1" stroke="#fff" stroke-width="3.1" fill="none" stroke-linecap="round" stroke-linejoin="round"/><path d="M1822.65 180.1L1827.05 184.8L1831.45 180.1" stroke="#fff" stroke-width="3.1" fill="none" stroke-linecap="round" stroke-linejoin="round"/><path d="M1971.4 180.1L1975.8 184.8L1980.2 180.1" stroke="#fff" stroke-width="3.1" fill="none" stroke-linecap="round" stroke-linejoin="round"/><path d="M2092.7 180.1L2097.1 184.8L2101.5 180.1" stroke="#fff" stroke-width="3.1" fill="none" stroke-linecap="round" stroke-linejoin="round"/><path d="M2230.6 180.1L2235 184.8L2239.4 180.1" stroke="#fff" stroke-width="3.1" fill="none" stroke-linecap="round" stroke-linejoin="round"/><path d="M2330.6 180.1L2335 184.8L2339.4 180.1" stroke="#fff" stroke-width="3.1" fill="none" stroke-linecap="round" stroke-linejoin="round"/><path d="M2430.45 180.1L2434.85 184.8L2439.25 180.1" stroke="#fff" stroke-width="3.1" fill="none" stroke-linecap="round" stroke-linejoin="round"/><path d="M2540.5 164.6L2544.9 169.3L2549.3 164.6" stroke="#fff" stroke-width="3.1" fill="none" stroke-linecap="round" stroke-linejoin="round"/><path d="M2540.5 208.6L2544.9 213.3L2549.3 208.6" stroke="#fff" stroke-width="3.1" fill="none" stroke-linecap="round" stroke-linejoin="round"/><path d="M2540.5 253.1L2544.9 257.8L2549.3 253.1" stroke="#fff" stroke-width="3.1" fill="none" stroke-linecap="round" stroke-linejoin="round"/><path d="M2640.6 180.1L2645 184.8L2649.4 180.1" stroke="#fff" stroke-width="3.1" fill="none" stroke-linecap="round" stroke-linejoin="round"/><path d="M2742.5 180.1L2746.9 184.8L2751.3 180.1" stroke="#fff" stroke-width="3.1" fill="none" stroke-linecap="round" stroke-linejoin="round"/><path d="M1304.6 241.1L1309 245.8L1313.4 241.1" stroke="#808080" stroke-width="3.1" fill="none" stroke-linecap="round" stroke-linejoin="round"/><path d="M73 176.100V165H37V207H58" stroke="#fbd98a" stroke-width="6.200" stroke-linecap="butt" stroke-linejoin="miter"/><path d="M73 176.100V167.200L71.800 166.200H38.200V205.800H58" stroke="#e8952e" stroke-width="3.800" stroke-linecap="butt" stroke-linejoin="miter"/><path d="M43.300 168.700V161.300H48.800C48.800 152.800 60.600 152.800 60.600 161.300H66.800V168.700Z" stroke="#9c9c9c" stroke-width="2.200" fill="#2a2a2a" stroke-linejoin="miter"/><rect x="61.200" y="179" width="25.600" height="33.900" stroke="#e2e2e2" stroke-width="2.400" fill="#2a2a2a" stroke-linejoin="miter"/><path d="M136.200 150.400L137.200 153.500L147.600 173.500L148.900 174.300M148 150.400L147 153.500L136.600 173.500L135.300 174.300" stroke="#d8d8d8" stroke-width="1.700"/><circle cx="135.900" cy="178" r="2.900" stroke="#3d9de0" stroke-width="2.200"/><circle cx="148.100" cy="178" r="2.900" stroke="#3d9de0" stroke-width="2.200"/><path d="M135.700 221H127.300V195.200H138.300L141.300 198" stroke="#dcdcdc" stroke-width="2.200" stroke-linejoin="miter"/><path d="M139.400 201.200H149.700L157 208.500V224.900H139.400Z" stroke="#dcdcdc" stroke-width="2.200" fill="#2a2a2a" stroke-linejoin="miter"/><path d="M149.700 201.200V208.500H157" stroke="#dcdcdc" stroke-width="2.200" stroke-linejoin="miter"/><path d="M144 214.800h8M144 218.900h8" stroke="#9a9a9a" stroke-width="2" stroke-linecap="butt"/><path d="M127 252.300C132 251 136.500 249.500 139.800 246.800L151 257.300C147.500 260.500 144 264 140.300 267.500Z" fill="#2a2a2a" stroke="#f8d386" stroke-width="1.800"/><path d="M133.500 257.800C138 260.500 143.500 261.300 148 260.300L140.300 267.500Z" fill="#e8952e" stroke="#f8d386" stroke-width="1.200"/><g transform="translate(147.500,249.500) rotate(45)"><rect x="-9.600" y="-1.600" width="19.200" height="4" rx="1" fill="#2a2a2a" stroke="#cfcfcf" stroke-width="1.900"/><rect x="-2.700" y="-14.500" width="5.400" height="12.900" rx="1.800" fill="#2a2a2a" stroke="#cfcfcf" stroke-width="1.900"/></g><path d="M639 187.800L649.300 163.300L659.600 187.800M642.300 180H656.300" stroke="#d4d4d4" stroke-width="2.200"/><path d="M659.500 169L663.800 164.800L668 169" stroke="#3d9de0" stroke-width="2.200"/><path d="M694 187.500L702.500 168L711 187.500M697 181.500H708" stroke="#d4d4d4" stroke-width="2.200"/><path d="M711.500 165L715.800 169.200L720 165" stroke="#3d9de0" stroke-width="2.200"/><path d="M448 227.3H478.200" stroke="#e4e4e4" stroke-width="2" stroke-dasharray="2 1.525" stroke-linecap="butt"/><path d="M448 240.4H478.200" stroke="#e4e4e4" stroke-width="2" stroke-dasharray="2 1.525" stroke-linecap="butt"/><path d="M449 226.300V253.200" stroke="#e4e4e4" stroke-width="2" stroke-dasharray="2 1.560" stroke-linecap="butt"/><path d="M463.1 226.300V253.200" stroke="#e4e4e4" stroke-width="2" stroke-dasharray="2 1.560" stroke-linecap="butt"/><path d="M477.2 226.300V253.200" stroke="#e4e4e4" stroke-width="2" stroke-dasharray="2 1.560" stroke-linecap="butt"/><path d="M448 254.600H478.200" stroke="#fff" stroke-width="2.400" stroke-linecap="butt"/><rect x="554" y="250" width="32" height="7.700" fill="#ffff33"/><path d="M569.300 229L558.800 239.500L568.100 248.700L580.300 236.600L574.500 231" stroke="#dcdcdc" stroke-width="2"/><path d="M569.900 230.500V228.300a1.800 1.800 0 0 1 3.600 0V238" stroke="#dcdcdc" stroke-width="1.800"/><path d="M576.500 233.300C581 233 583 237 582.300 246C580.500 241 579.500 237.500 576.500 233.300Z" fill="#6cb8f0"/><rect x="630" y="250" width="32" height="7.700" fill="#f00"/><path d="M637 247L646 227.500L655 247M640.500 240H651.500" stroke="#d8d8d8" stroke-width="2.200"/><path d="M780.1 163.1H807.9M784 171.1H804M780.1 179.1H807.9" stroke="#e2e2e2" stroke-width="2.200" stroke-linecap="butt"/><path d="M832 169.1H860M836 177.1H856M832 185.1H860" stroke="#e2e2e2" stroke-width="2.200" stroke-linecap="butt"/><path d="M884 177.1H912M888 185.1H908M884 193.2H912" stroke="#e2e2e2" stroke-width="2.200" stroke-linecap="butt"/><path d="M780.1 229H807.9M780.1 237.1H800M780.1 245.1H807.9M780.1 253.2H800" stroke="#e2e2e2" stroke-width="2.200" stroke-linecap="butt"/><path d="M832 229H860M836 237.1H856M832 245.1H860M836 253.2H856" stroke="#e2e2e2" stroke-width="2.200" stroke-linecap="butt"/><path d="M884 229H912M892 237.1H912M884 245.1H912M892 253.2H912" stroke="#e2e2e2" stroke-width="2.200" stroke-linecap="butt"/><path d="M966 229H994M982.1 237.1H994M982.1 245.1H994M966 253.2H994" stroke="#e2e2e2" stroke-width="2.200" stroke-linecap="butt"/><path d="M977.500 241H967.500M971.600 236.600L967.200 241L971.600 245.400" stroke="#3d9de0" stroke-width="2.500"/><path d="M1017.9 229H1046M1034.1 237.1H1046M1034.1 245.1H1046M1017.9 253.2H1046" stroke="#e2e2e2" stroke-width="2.200" stroke-linecap="butt"/><path d="M1018.500 241H1028.500M1024.400 236.600L1028.800 241L1024.400 245.400" stroke="#3d9de0" stroke-width="2.500"/><path d="M975.200 191L995 171.800M988.500 171.200H995.500V178.200" stroke="#3d9de0" stroke-width="2.400" stroke-linejoin="miter"/><text x="0" y="0" transform="translate(969.500,182.500) rotate(-45)" font-family="Liberation Sans, sans-serif" font-size="19.500" fill="#d4d4d4" stroke="none">ab</text><text x="1102" y="177.500" font-family="Liberation Sans, sans-serif" font-size="21" fill="#d4d4d4" stroke="none">ab</text><text x="1102" y="193" font-family="Liberation Sans, sans-serif" font-size="21" fill="#d4d4d4" stroke="none">c</text><path d="M1127.500 178.500C1132 182 1129.500 188 1124 188H1116M1121 183.500L1116 188L1121 192.500" stroke="#3d9de0" stroke-width="2.200"/><path d="M1098.700 227H1127.500V255.500H1098.700ZM1098.700 232.500H1127.500M1098.700 250H1127.500M1113 227V232.500M1113 250V255.500" stroke="#606060" stroke-width="2"/><rect x="1098.700" y="232.600" width="28.800" height="17.300" stroke="#2a5f8c" stroke-width="2"/><path d="M1103 241.200H1123.500M1107 237.500L1103 241.200L1107 245M1119.500 237.500L1123.500 241.200L1119.500 245" stroke="#2c6a9a" stroke-width="2"/><rect x="1372" y="233" width="30.500" height="18" stroke="#d8d8d8" stroke-width="1.800"/><path d="M1383 237.500C1378 237 1378 247 1383 246.500M1389 237.500C1393 237 1395 239.500 1395 242" stroke="#d8d8d8" stroke-width="1.800"/><path d="M1388 243.500V254C1388 258 1402.500 258 1402.500 254V243.500" fill="#2a2a2a" stroke="#f6c97a" stroke-width="1.800"/><ellipse cx="1395.200" cy="243.500" rx="7.200" ry="2.800" fill="#2a2a2a" stroke="#f6c97a" stroke-width="1.800"/><path d="M1388 249C1388 252.500 1402.500 252.500 1402.500 249" stroke="#f6c97a" stroke-width="1.800"/><text x="1446.500" y="256" font-family="Liberation Sans, sans-serif" font-size="36" fill="#d4d4d4" stroke="none" textLength="32" lengthAdjust="spacingAndGlyphs">%</text><path d="M1516 230.500a7 7 0 1 0 0.100 0ZM1522.500 236C1523.500 245 1520 251 1510.500 254.500" fill="#d4d4d4" stroke="#d4d4d4" stroke-width="2"/><text x="1598" y="240" font-family="Liberation Sans, sans-serif" font-size="17.500" fill="#d4d4d4" stroke="none">,0</text><text x="1587.500" y="256" font-family="Liberation Sans, sans-serif" font-size="17.500" fill="#d4d4d4" stroke="none">,00</text><path d="M1597 235.500H1582M1587 230.500L1582 235.500L1587 240.500" stroke="#3d9de0" stroke-width="2"/><text x="1639.500" y="240" font-family="Liberation Sans, sans-serif" font-size="17.500" fill="#d4d4d4" stroke="none">,00</text><text x="1650" y="256" font-family="Liberation Sans, sans-serif" font-size="17.500" fill="#d4d4d4" stroke="none">,0</text><path d="M1634 250.500H1649M1644 245.500L1649 250.500L1644 255.500" stroke="#3d9de0" stroke-width="2"/><path d="M1761.5 160.5V203.5M1786.5 160.5V203.5M1796.5 160.5V203.5M1751.5 174.8H1806.0M1751.5 189.1H1806.0" stroke="#a4a4a4" stroke-width="1.9000000000000001" stroke-linecap="butt"/><path d="M1751.5 160.5H1806.0V203.5H1751.5Z" stroke="#d6d4d0" stroke-width="2.2" stroke-linejoin="miter"/><rect x="1761.500" y="160.500" width="25" height="14.300" fill="#b03030" stroke="#e05050" stroke-width="1.500"/><rect x="1761.500" y="174.800" width="16.500" height="14.300" fill="#1f6fb0" stroke="#3d9de0" stroke-width="1.500"/><rect x="1761.500" y="189.100" width="29" height="14.400" fill="#b03030" stroke="#e05050" stroke-width="1.500"/><path d="M1918.5 160.5V203.5M1937.0 160.5V203.5M1900.5 174.8H1955.0M1900.5 189.1H1955.0" stroke="#a4a4a4" stroke-width="1.9000000000000001" stroke-linecap="butt"/><path d="M1900.5 160.5H1955.0V203.5H1900.5Z" stroke="#d6d4d0" stroke-width="2.2" stroke-linejoin="miter"/><rect x="1918.500" y="174.800" width="36.500" height="28.700" fill="#0f6cbd"/><path d="M1937 174.800V203.500M1918.500 189.100H1955" stroke="#5ab0f0" stroke-width="1.500"/><g transform="translate(0,0)"><path d="M1958.500 175.200C1962.500 177.500 1956 188 1938.500 204.500L1931 198.500C1946 181 1955 173.500 1958.500 175.200Z" fill="#2a2a2a" stroke="#2a2a2a" stroke-width="6"/><path d="M1958.500 175.200C1962.500 177.500 1956 188 1938.500 204.500L1931 198.500C1946 181 1955 173.500 1958.500 175.200Z" fill="#2a2a2a" stroke="#d4d4d4" stroke-width="1.900"/><path d="M1930.500 198.300C1925 197.500 1921.500 201.500 1921.500 206C1920.500 209 1917.500 210.200 1914.800 209.600C1920 215 1935.500 215.500 1938.800 204.800Z" fill="#1f74c4" stroke="#6cb8f0" stroke-width="1.500"/></g><path d="M2031.0 160.5V203.5M2066.5 160.5V203.5M2021.5 170.5H2076.0M2021.5 193.5H2076.0" stroke="#a4a4a4" stroke-width="1.9000000000000001" stroke-linecap="butt"/><path d="M2021.5 160.5H2076.0V203.5H2021.5Z" stroke="#d6d4d0" stroke-width="2.2" stroke-linejoin="miter"/><rect x="2031" y="170.500" width="35.500" height="23" fill="#0f6cbd" stroke="#3d9de0" stroke-width="1.500"/><g transform="translate(121,0)"><path d="M1958.500 175.200C1962.500 177.500 1956 188 1938.500 204.500L1931 198.500C1946 181 1955 173.500 1958.500 175.200Z" fill="#2a2a2a" stroke="#2a2a2a" stroke-width="6"/><path d="M1958.500 175.200C1962.500 177.500 1956 188 1938.500 204.500L1931 198.500C1946 181 1955 173.500 1958.500 175.200Z" fill="#2a2a2a" stroke="#d4d4d4" stroke-width="1.900"/><path d="M1930.500 198.300C1925 197.500 1921.500 201.500 1921.500 206C1920.500 209 1917.500 210.200 1914.800 209.600C1920 215 1935.500 215.500 1938.800 204.800Z" fill="#1f74c4" stroke="#6cb8f0" stroke-width="1.500"/></g><path d="M2177.9 161.2V202.79999999999998M2196.2 161.2V202.79999999999998" stroke="#a4a4a4" stroke-width="1.9000000000000001" stroke-linecap="butt"/><path d="M2160.1 161.2H2213.7999999999997V202.79999999999998H2160.1Z" stroke="#d6d4d0" stroke-width="2.2" stroke-linejoin="miter"/><rect x="2166" y="174.800" width="52.300" height="14.400" fill="#0f62ae" stroke="#6cb8f0" stroke-width="1.600"/><path d="M2182.100 174.800V189.200M2200 174.800V189.200" stroke="#6cb8f0" stroke-width="1.600" stroke-linecap="butt"/><rect x="2160" y="178.600" width="21" height="6.800" fill="#2a2a2a" stroke="none"/><path d="M2181.500 179.700H2158.500M2181.500 184.300H2158.500" stroke="#3d9de0" stroke-width="1.700" stroke-linecap="butt"/><path d="M2169 169.500L2156.500 182L2169 194.500" stroke="#3d9de0" stroke-width="2.400" stroke-linejoin="miter" stroke-linecap="butt"/><path d="M2278.0 161.2V202.79999999999998M2296.2999999999997 161.2V202.79999999999998" stroke="#a4a4a4" stroke-width="1.9000000000000001" stroke-linecap="butt"/><path d="M2260.2 161.2H2313.8999999999996V202.79999999999998H2260.2Z" stroke="#d6d4d0" stroke-width="2.2" stroke-linejoin="miter"/><rect x="2256" y="174.700" width="62" height="14.600" fill="#2a2a2a" stroke="none"/><path d="M2259.100 174.700H2268M2259.100 189.300H2268M2300 174.700H2315M2300 189.300H2315" stroke="#d6d4d0" stroke-width="2.200" stroke-linecap="butt"/><path d="M2268 174.800H2292.500L2299.800 182L2292.500 189.200H2268Z" fill="#0f62ae" stroke="#6cb8f0" stroke-width="1.600" stroke-linejoin="miter"/><path d="M2286.100 174.800V189.200" stroke="#6cb8f0" stroke-width="1.600" stroke-linecap="butt"/><path d="M2295 172L2317.300 193.800M2317.300 172L2295 193.800" stroke="#e8504a" stroke-width="2.500"/><path d="M2373.9 161.2V202.79999999999998M2400.6000000000004 161.2V202.79999999999998M2360.3 174.39999999999998H2413.7000000000003M2360.3 189.2H2413.7000000000003" stroke="#a4a4a4" stroke-width="1.9000000000000001" stroke-linecap="butt"/><path d="M2360.3 161.2H2413.7000000000003V202.79999999999998H2360.3Z" stroke="#d6d4d0" stroke-width="2.2" stroke-linejoin="miter"/><rect x="2373.900" y="174.800" width="26.700" height="14.400" fill="#0f62ae" stroke="#6cb8f0" stroke-width="1.600"/><path d="M2372.300 153.300H2402M2372.300 150.200V156.300M2402 150.200V156.300" stroke="#3d9de0" stroke-width="1.900" stroke-linecap="butt"/><path d="M2521.800 157V153.200H2500.600L2512.500 165.800L2500.600 178.400H2521.800V174.600" stroke="#e0e0e0" stroke-width="2.200" stroke-linejoin="miter"/><rect x="2495.500" y="197.500" width="30.500" height="25" stroke="#d0d0d0" stroke-width="1.800"/><path d="M2495.500 201.500H2526" stroke="#d0d0d0" stroke-width="1.800"/><path d="M2510.500 205V218.500M2505.500 213.500L2510.500 218.500L2515.500 213.500" stroke="#3d9de0" stroke-width="2.200"/><path d="M2496.500 257L2514.500 240L2525 251L2508 268Z" stroke="#c86ad0" stroke-width="2"/><path d="M2496.500 257L2503.500 250.500L2514.500 261.500L2508 268Z" fill="#a030b0" stroke="#c86ad0" stroke-width="2"/><path d="M2570 179.500L2579 157L2588 179.500M2573 173H2585" stroke="#3d9de0" stroke-width="2.200"/><path d="M2571 185H2586L2570 207H2587" stroke="#d0d0d0" stroke-width="2.200"/><path d="M2594 169.500H2624L2612.500 184V198.500H2605.500V184Z" stroke="#d0d0d0" stroke-width="2.200"/><circle cx="2706" cy="174.500" r="20" stroke="#d0d0d0" stroke-width="2"/><path d="M2691.500 189L2670 211" stroke="#d0d0d0" stroke-width="2.200"/><polygon points="146,307.500 160.600,307.500 153.300,295.500" fill="#b8b8b8"/><polygon points="146,319.500 160.600,319.500 153.300,331.500" fill="#b8b8b8"/><path d="M203.200 305L219 320.800M219 305L203.200 320.800" stroke="#525252" stroke-width="5" stroke-linecap="butt"/><path d="M258 313.200L266 320.800L282.800 304.600" stroke="#4e4e4e" stroke-width="5" stroke-linecap="butt" stroke-linejoin="miter"/><polygon points="2857.700,308 2871.700,308 2864.700,319.500" fill="#b8b8b8"/></svg>
<div style="left:0px;top:1701.5px;width:2880px;height:53px;background:#323232;"></div>
<div style="left:0px;top:1701.5px;width:2880px;height:1.5px;background:#474747;"></div>
<div style="left:0px;top:1753.5px;width:2880px;height:1.5px;background:#161616;"></div>
<div style="left:0px;top:1755px;width:2880px;height:45px;background:linear-gradient(#474747,#3e3e3e);"></div>
<div style="left:122px;top:1700px;width:156.5px;height:46.5px;background:#fff;border-radius:0 0 7px 7px;box-shadow:0 1px 1.500px rgba(160,160,160,.9);"></div>
<span style="left:157.64px;top:1716px;font:bold 24px/24px 'Liberation Sans',sans-serif;color:#1f8a4e;white-space:pre;letter-spacing:-0.544px;-webkit-text-stroke:0.3px #1f8a4e;">Foglio1</span>
<svg style="left:0;top:1701px" width="400" height="54"><polygon points="44,18.7 44,38.7 30,28.7" fill="#5e5e5e"/><polygon points="76,18.7 76,38.7 90,28.7" fill="#5e5e5e"/><path d="M308 27.5h20M318 17.5v20" stroke="#b4b4b4" stroke-width="4.400"/><rect x="354.3" y="3" width="1.4" height="41" fill="#555"/></svg>
<span style="left:47.16px;top:1767px;font:23px/23px 'Liberation Sans',sans-serif;color:#e4e4e4;white-space:pre;letter-spacing:1.605px;">Pronto</span>
<span style="left:198.70px;top:1767px;font:23px/23px 'Liberation Sans',sans-serif;color:#e4e4e4;white-space:pre;letter-spacing:1.091px;">Accessibilità: verifica</span>
<span style="left:1658.96px;top:1767px;font:23px/23px 'Liberation Sans',sans-serif;color:#e4e4e4;white-space:pre;letter-spacing:1.649px;">Media: € 42</span>
<span style="left:1835.25px;top:1767px;font:23px/23px 'Liberation Sans',sans-serif;color:#e4e4e4;white-space:pre;letter-spacing:1.570px;">Conteggio: 44</span>
<span style="left:2037.96px;top:1767px;font:23px/23px 'Liberation Sans',sans-serif;color:#e4e4e4;white-space:pre;letter-spacing:1.127px;">Somma: € 1.846</span>
<span style="left:2767.28px;top:1767px;font:23px/23px 'Liberation Sans',sans-serif;color:#e4e4e4;white-space:pre;letter-spacing:1.483px;">100%</span>
<div style="left:2241.6px;top:1755px;width:74px;height:45px;background:#585858;"></div>
<svg style="left:0;top:1755px" width="2880" height="45" fill="none" stroke="#f4f4f4" stroke-width="2.300">
<g><rect x="2266.600" y="10.300" width="24.800" height="24.600" rx="1.500"/><path d="M2274.900 10.300v24.600M2283.100 10.300v24.600M2266.600 18.500h24.800M2266.600 26.700h24.800"/></g>
<g><rect x="2337.800" y="10.300" width="26.400" height="24.600" rx="1.500"/><rect x="2343.600" y="14.800" width="15" height="15.400"/><path d="M2347.300 18.600h7.600M2347.300 22.600h7.600M2347.300 26.600h7.600" stroke-width="1.700"/></g>
<g><rect x="2408.700" y="10.300" width="26.400" height="24.600" rx="1.500"/><path d="M2408.700 24.700h26.400M2416.800 10.300v14.400M2425 10.300v14.400"/></g>
<path d="M2473.800 22.500h16.400" stroke-width="3.600"/><path d="M2717.600 22.500h16.800M2726 14.200v16.600" stroke-width="3.600"/>
<rect x="2504.500" y="18.300" width="199.500" height="8.400" rx="4.200" fill="#7c7c7c" stroke="none"/>
<circle cx="2604.300" cy="22" r="16" fill="#a8a8a8" stroke="none"/>
</svg>
<svg style="left:0;top:0" width="400" height="1800" fill="none" stroke-linecap="round" stroke-linejoin="round">
<path d="M165.200 1770.300L174.600 1773.800L184.600 1769.600M174.600 1773.800V1780.500M174.600 1780.500L168.800 1790.300M174.600 1780.500L177.300 1785" stroke="#ececec" stroke-width="5.600"/><path d="M165.200 1770.300L174.600 1773.800L184.600 1769.600M174.600 1773.800V1780.500M174.600 1780.500L168.800 1790.300M174.600 1780.500L177.300 1785" stroke="#454545" stroke-width="2.200"/>
<circle cx="174.800" cy="1765.900" r="3.300" stroke="#ececec" stroke-width="1.800" fill="#464646"/>
<path d="M179.600 1791.200L190.800 1779.600M181 1780.800L191.300 1791" stroke="#ececec" stroke-width="1.900"/></svg>
<div style="left:1033.5px;top:475.5px;width:570.5px;height:820.5px;background:#322626;border-radius:13px;box-shadow:0 0 0 1.500px rgba(0,0,0,.75),0 20px 44px rgba(0,0,0,.33),0 2px 7px rgba(0,0,0,.18);overflow:hidden;"><div style="left:0;top:0;width:570.5px;height:38.500px;background:#3d3333;"></div><div style="left:0;top:38.500px;width:570.5px;height:1.500px;background:#1a1212;"></div><div style="left:0;top:0;width:568.5px;height:818.5px;border:1px solid rgba(255,255,255,.17);border-radius:13px;"></div></div>
<div style="left:1043.9px;top:485.9px;width:18.3px;height:18.3px;background:#fe5f57;border-radius:50%;"></div>
<span style="left:1294.59px;top:484px;font:22px/22px 'Liberation Sans',sans-serif;color:#b4aeae;white-space:pre;letter-spacing:1.460px;-webkit-text-stroke:0.35px #b4aeae;">€ 90</span>
<span style="left:1055.80px;top:528px;font:bold 22.5px/22.5px 'Liberation Sans',sans-serif;color:#e6e2e2;white-space:pre;letter-spacing:0.553px;-webkit-text-stroke:0.35px #e6e2e2;">Ordinamento</span>
<div style="left:1074px;top:568.4px;width:241.6px;height:47.3px;background:#4a4141;border:1.500px solid #625959;box-sizing:border-box;"></div>
<div style="left:1322px;top:568.4px;width:242.2px;height:47.3px;background:#8b8585;"></div>
<span style="left:1124.12px;top:580px;font:25.5px/25.5px 'Liberation Sans',sans-serif;color:#e8e4e4;white-space:pre;letter-spacing:0.954px;-webkit-text-stroke:0.35px #e8e4e4;">Crescente</span>
<span style="left:1371.26px;top:580px;font:25.5px/25.5px 'Liberation Sans',sans-serif;color:#f4f2f2;white-space:pre;letter-spacing:1.118px;-webkit-text-stroke:0.35px #f4f2f2;">Decrescente</span>
<svg style="left:1074px;top:568px" width="500" height="48">
<text x="11" y="21.600" font-family="Liberation Sans, sans-serif" font-weight="bold" font-size="18.500" stroke="none" fill="#3a85d8">A</text><text x="12" y="39.400" font-family="Liberation Sans, sans-serif" font-weight="bold" font-size="18.500" stroke="none" fill="#4a4e5a">Z</text>
<path d="M33.7 16H38.5V27.200H42.2L36.1 36.500L30.0 27.200H33.7Z" fill="#121212"/>
<text x="259.500" y="21.600" font-family="Liberation Sans, sans-serif" font-weight="bold" font-size="18.500" stroke="none" fill="#54586a">Z</text><text x="258.500" y="39.400" font-family="Liberation Sans, sans-serif" font-weight="bold" font-size="18.500" stroke="none" fill="#3a85d8">A</text>
<path d="M281.70000000000005 16H286.5V27.200H290.20000000000005L284.1 36.500L278.0 27.200H281.70000000000005Z" fill="#121212"/>
</svg>
<span style="left:1072.70px;top:638px;font:22.5px/22.5px 'Liberation Sans',sans-serif;color:#eeeaea;white-space:pre;letter-spacing:0.701px;-webkit-text-stroke:0.35px #eeeaea;">Per colore:</span>
<div style="left:1208px;top:631.8px;width:356.2px;height:32.2px;background:#625a5a;border-radius:7px;box-shadow:0 1px 1px rgba(0,0,0,.35);"></div>
<span style="left:1218.50px;top:638px;font:22.5px/22.5px 'Liberation Sans',sans-serif;color:#f0eded;white-space:pre;letter-spacing:0.605px;-webkit-text-stroke:0.35px #f0eded;">Nessuno</span>
<div style="left:1535.7px;top:636px;width:24.8px;height:24.3px;background:linear-gradient(#22844c,#1a7040);border-radius:6px;"><svg width="25" height="25" style="left:0;top:0"><path d="M8 10L12.400 5.800L16.800 10M8 14.800L12.400 19L16.800 14.800" stroke="#fff" stroke-width="2.200" fill="none" stroke-linecap="round" stroke-linejoin="round"/></svg></div>
<div style="left:1074px;top:680px;width:490.2px;height:1.5px;background:#4c4343;"></div>
<span style="left:1055.24px;top:694px;font:bold 22.5px/22.5px 'Liberation Sans',sans-serif;color:#e6e2e2;white-space:pre;letter-spacing:0.598px;-webkit-text-stroke:0.35px #e6e2e2;">Filtro</span>
<span style="left:1072.70px;top:740px;font:22.5px/22.5px 'Liberation Sans',sans-serif;color:#eeeaea;white-space:pre;letter-spacing:0.701px;-webkit-text-stroke:0.35px #eeeaea;">Per colore:</span>
<div style="left:1208px;top:733.5px;width:356.2px;height:32.2px;background:#625a5a;border-radius:7px;"></div>
<div style="left:1535.7px;top:737.7px;width:24.8px;height:24.3px;background:linear-gradient(#22844c,#1a7040);border-radius:6px;"></div>
<div style="left:1074px;top:788px;width:260px;height:31.8px;background:#625a5a;border-radius:7px;box-shadow:0 1px 1px rgba(0,0,0,.35);"></div>
<span style="left:1085.39px;top:793px;font:22.5px/22.5px 'Liberation Sans',sans-serif;color:#f0eded;white-space:pre;-webkit-text-stroke:0.35px #f0eded;">Scegliere un</span>
<div style="left:1070.3px;top:840px;width:496.4px;height:44px;background:#2f7650;border-radius:13px;"></div>
<div style="left:1076.8px;top:846.9px;width:483.4px;height:30px;background:#3a3030;border-radius:7px;"></div>
<svg style="left:1088px;top:849px" width="28" height="28"><circle cx="11.600" cy="11.500" r="8" stroke="#d8d4d4" stroke-width="2" fill="none"/><path d="M17.500 17.500L23.500 23.500" stroke="#d8d4d4" stroke-width="2.200" stroke-linecap="round"/></svg>
<span style="left:1127.47px;top:852px;font:22.5px/22.5px 'Liberation Sans',sans-serif;color:#7e7575;white-space:pre;letter-spacing:0.260px;-webkit-text-stroke:0.35px #7e7575;">Cerca</span>
<div style="left:1074px;top:895.9px;width:490.2px;height:300px;background:#2a1e1e;"></div>
<div style="left:1128px;top:922.4px;width:27.6px;height:27.6px;background:linear-gradient(#228a50,#1c7643);border-radius:6px;box-shadow:0 1px 1.500px rgba(0,0,0,.5);"><svg width="27.6" height="27.6" style="left:0;top:0" viewBox="0 0 28 28"><path d="M7 14.500L12 20.500L21 7.500" stroke="#e8f3ec" stroke-width="3.400" fill="none" stroke-linecap="round" stroke-linejoin="round"/></svg></div>
<span style="left:1167.97px;top:925px;font:25.5px/25.5px 'Liberation Sans',sans-serif;color:#eeeaea;white-space:pre;letter-spacing:0.981px;-webkit-text-stroke:0.35px #eeeaea;">(Seleziona tutto)</span>
<div style="left:1128px;top:962.4px;width:27.6px;height:27.6px;background:linear-gradient(#228a50,#1c7643);border-radius:6px;box-shadow:0 1px 1.500px rgba(0,0,0,.5);"><svg width="27.6" height="27.6" style="left:0;top:0" viewBox="0 0 28 28"><path d="M7 14.500L12 20.500L21 7.500" stroke="#e8f3ec" stroke-width="3.400" fill="none" stroke-linecap="round" stroke-linejoin="round"/></svg></div>
<span style="left:1169.37px;top:965px;font:25.5px/25.5px 'Liberation Sans',sans-serif;color:#eeeaea;white-space:pre;letter-spacing:0.180px;-webkit-text-stroke:0.35px #eeeaea;">€ 15</span>
<div style="left:1128px;top:1002.4px;width:27.6px;height:27.6px;background:linear-gradient(#228a50,#1c7643);border-radius:6px;box-shadow:0 1px 1.500px rgba(0,0,0,.5);"><svg width="27.6" height="27.6" style="left:0;top:0" viewBox="0 0 28 28"><path d="M7 14.500L12 20.500L21 7.500" stroke="#e8f3ec" stroke-width="3.400" fill="none" stroke-linecap="round" stroke-linejoin="round"/></svg></div>
<span style="left:1169.37px;top:1005px;font:25.5px/25.5px 'Liberation Sans',sans-serif;color:#eeeaea;white-space:pre;letter-spacing:0.765px;-webkit-text-stroke:0.35px #eeeaea;">€ 37,36</span>
<div style="left:1128px;top:1042.4px;width:27.6px;height:27.6px;background:linear-gradient(#228a50,#1c7643);border-radius:6px;box-shadow:0 1px 1.500px rgba(0,0,0,.5);"><svg width="27.6" height="27.6" style="left:0;top:0" viewBox="0 0 28 28"><path d="M7 14.500L12 20.500L21 7.500" stroke="#e8f3ec" stroke-width="3.400" fill="none" stroke-linecap="round" stroke-linejoin="round"/></svg></div>
<span style="left:1169.37px;top:1045px;font:25.5px/25.5px 'Liberation Sans',sans-serif;color:#eeeaea;white-space:pre;letter-spacing:1.780px;-webkit-text-stroke:0.35px #eeeaea;">€ 38</span>
<div style="left:1128px;top:1082.4px;width:27.6px;height:27.6px;background:linear-gradient(#228a50,#1c7643);border-radius:6px;box-shadow:0 1px 1.500px rgba(0,0,0,.5);"><svg width="27.6" height="27.6" style="left:0;top:0" viewBox="0 0 28 28"><path d="M7 14.500L12 20.500L21 7.500" stroke="#e8f3ec" stroke-width="3.400" fill="none" stroke-linecap="round" stroke-linejoin="round"/></svg></div>
<span style="left:1169.37px;top:1085px;font:25.5px/25.5px 'Liberation Sans',sans-serif;color:#eeeaea;white-space:pre;letter-spacing:0.837px;-webkit-text-stroke:0.35px #eeeaea;">€ 39,77</span>
<div style="left:1128px;top:1122.4px;width:27.6px;height:27.6px;background:linear-gradient(#228a50,#1c7643);border-radius:6px;box-shadow:0 1px 1.500px rgba(0,0,0,.5);"><svg width="27.6" height="27.6" style="left:0;top:0" viewBox="0 0 28 28"><path d="M7 14.500L12 20.500L21 7.500" stroke="#e8f3ec" stroke-width="3.400" fill="none" stroke-linecap="round" stroke-linejoin="round"/></svg></div>
<span style="left:1169.37px;top:1125px;font:25.5px/25.5px 'Liberation Sans',sans-serif;color:#eeeaea;white-space:pre;letter-spacing:0.527px;-webkit-text-stroke:0.35px #eeeaea;">€ 41,90</span>
<div style="left:1128px;top:1162.4px;width:27.6px;height:27.6px;background:linear-gradient(#228a50,#1c7643);border-radius:6px;box-shadow:0 1px 1.500px rgba(0,0,0,.5);"><svg width="27.6" height="27.6" style="left:0;top:0" viewBox="0 0 28 28"><path d="M7 14.500L12 20.500L21 7.500" stroke="#e8f3ec" stroke-width="3.400" fill="none" stroke-linecap="round" stroke-linejoin="round"/></svg></div>
<span style="left:1169.37px;top:1165px;font:25.5px/25.5px 'Liberation Sans',sans-serif;color:#eeeaea;white-space:pre;letter-spacing:1.244px;-webkit-text-stroke:0.35px #eeeaea;">€ 44,50</span>
<div style="left:1074px;top:1207.8px;width:24.4px;height:24.4px;background:linear-gradient(#228a50,#1c7643);border-radius:6px;box-shadow:0 1px 1.500px rgba(0,0,0,.5);"><svg width="24.4" height="24.4" style="left:0;top:0" viewBox="0 0 28 28"><path d="M7 14.500L12 20.500L21 7.500" stroke="#e8f3ec" stroke-width="3.400" fill="none" stroke-linecap="round" stroke-linejoin="round"/></svg></div>
<span style="left:1106.70px;top:1210px;font:22.5px/22.5px 'Liberation Sans',sans-serif;color:#eeeaea;white-space:pre;letter-spacing:0.587px;-webkit-text-stroke:0.35px #eeeaea;">Applica automaticamente</span>
<div style="left:1208px;top:1244.4px;width:165.6px;height:31.4px;background:#4d4444;border-radius:7px;"></div>
<span style="left:1223.60px;top:1249px;font:22.5px/22.5px 'Liberation Sans',sans-serif;color:#857c7c;white-space:pre;letter-spacing:0.799px;-webkit-text-stroke:0.35px #857c7c;">Applica filtro</span>
<div style="left:1386px;top:1244.4px;width:178px;height:31.4px;background:#4d4444;border-radius:7px;"></div>
<span style="left:1400.88px;top:1249px;font:22.5px/22.5px 'Liberation Sans',sans-serif;color:#857c7c;white-space:pre;letter-spacing:0.670px;-webkit-text-stroke:0.35px #857c7c;">Cancella filtro</span>
<div style="left:1205.6px;top:724.3px;width:348.2px;height:179.5px;background:linear-gradient(#3d3333,#352d2a);border-radius:11px;box-shadow:0 0 0 1.200px rgba(0,0,0,.8),inset 0 0 0 1.200px rgba(255,255,255,.2),0 12px 30px rgba(0,0,0,.45);"></div>
<div style="left:1215.9px;top:774.4px;width:327.3px;height:39.6px;background:#574d4d;border-radius:8px;"></div>
<svg style="left:1206px;top:724px" width="348" height="180" fill="none" stroke-linecap="round" stroke-linejoin="round"><path d="M19.300 31L23.300 36.300L31.800 24" stroke="#f2eeee" stroke-width="3"/><path d="M314 65.500L321 71.500L314 77.500" stroke="#f2eeee" stroke-width="2.800"/><path d="M314 105.700L321 111.700L314 117.700" stroke="#7a7070" stroke-width="2.800"/><path d="M314 145.900L321 151.900L314 157.900" stroke="#7a7070" stroke-width="2.800"/></svg>
<span style="left:1246.80px;top:744px;font:22.5px/22.5px 'Liberation Sans',sans-serif;color:#f2eeee;white-space:pre;letter-spacing:0.655px;-webkit-text-stroke:0.35px #f2eeee;">Nessuno</span>
<span style="left:1247.47px;top:783px;font:22.5px/22.5px 'Liberation Sans',sans-serif;color:#f2eeee;white-space:pre;letter-spacing:0.401px;-webkit-text-stroke:0.35px #f2eeee;">Colore cella</span>
<span style="left:1247.47px;top:823px;font:22.5px/22.5px 'Liberation Sans',sans-serif;color:#7c7272;white-space:pre;letter-spacing:0.587px;-webkit-text-stroke:0.35px #7c7272;">Colore carattere</span>
<span style="left:1246.57px;top:864px;font:22.5px/22.5px 'Liberation Sans',sans-serif;color:#7c7272;white-space:pre;letter-spacing:0.415px;-webkit-text-stroke:0.35px #7c7272;">Icona cella</span>
<div style="left:1544.2px;top:763.6px;width:256.2px;height:102.4px;background:linear-gradient(to right,#4a4040 0,#4e4545 23%,#625a5a 28%,#686060 100%);border-radius:11px;box-shadow:0 0 0 1.200px rgba(0,0,0,.8),inset 0 0 0 1.200px rgba(255,255,255,.22),0 12px 30px rgba(0,0,0,.4);"></div>
<div style="left:1554.2px;top:774px;width:235.8px;height:41.8px;background:linear-gradient(to right,#237a4a 0,#2a8253 20%,#4f9c77 40%,#55a07b 100%);border-radius:8px;"></div>
<div style="left:1564px;top:780.5px;width:119.6px;height:28.5px;background:#ffff36;border:2px solid #8b8b70;box-sizing:border-box;"></div>
<span style="left:1695.58px;top:786px;font:22.5px/22.5px 'Liberation Sans',sans-serif;color:#f4f8f4;white-space:pre;letter-spacing:0.286px;-webkit-text-stroke:0.35px #f4f8f4;">Giallo</span>
<span style="left:1563.20px;top:826px;font:22.5px/22.5px 'Liberation Sans',sans-serif;color:#f0eded;white-space:pre;letter-spacing:0.581px;-webkit-text-stroke:0.35px #f0eded;">Nessun riempimento</span>
<div style="left:1807.8px;top:776px;width:84.6px;height:36.2px;background:#efefef;border:1px solid #d2d2d2;box-sizing:border-box;box-shadow:0 3px 9px rgba(0,0,0,.25);"></div>
<span style="left:1819.78px;top:784px;font:22.5px/22.5px 'Liberation Sans',sans-serif;color:#000;white-space:pre;letter-spacing:0.286px;-webkit-text-stroke:0.35px #000;">Giallo</span>
</div>
</body></html>
